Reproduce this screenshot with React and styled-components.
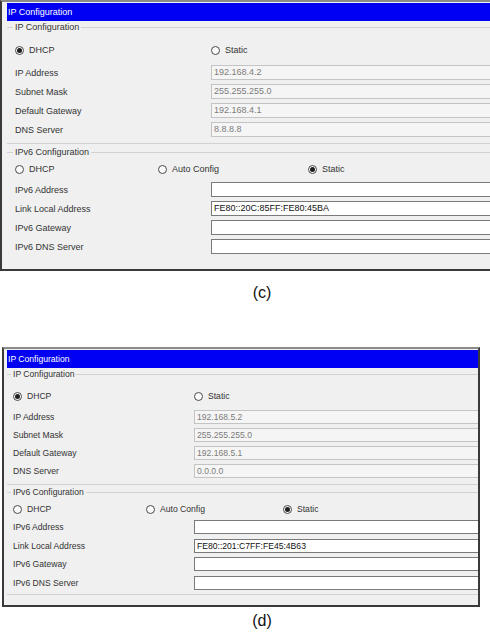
import React from "react";
import styled, { createGlobalStyle } from "styled-components";

const GlobalStyle = createGlobalStyle`
  body {
    margin: 0;
    background: #ffffff;
    font-family: "Liberation Sans", Arial, sans-serif;
  }
`;

const Page = styled.div`
  display: flex;
  flex-direction: column;
  width: 490px;
`;

const Window = styled.div`
  box-sizing: border-box;
  width: ${(p) => p.$s.width}px;
  margin-left: ${(p) => p.$s.left}px;
  background: #f0f0f0;
  border: 2px solid #3a3a3a;
  border-top-color: #8a8a8a;
  border-right: ${(p) => (p.$s.rightBorder ? "2px solid #3a3a3a" : "none")};
  font-size: ${(p) => p.$s.font}px;
  color: #333;
  display: flex;
  flex-direction: column;
`;

const TitleBar = styled.div`
  height: 18px;
  line-height: 18px;
  margin: ${(p) => p.$s.titleTop}px 0 0 ${(p) => p.$s.titleLeft}px;
  background: #0000f2;
  color: #ffffff;
  padding-left: 1px;
`;

const Group = styled.div`
  display: flex;
  flex-direction: column;
  margin: ${(p) => p.$top}px 0 ${(p) => p.$bottom || 0}px ${(p) => p.$s.groupLeft}px;
  padding: 0 0 ${(p) => p.$padBottom}px ${(p) => p.$s.groupPad}px;
  border-bottom: ${(p) => (p.$line ? "1px solid #d2d2d2" : "none")};
`;

const GroupTitle = styled.div`
  display: flex;
  align-items: center;
  height: 11px;
  line-height: 11px;
  margin-left: -${(p) => p.$s.groupPad}px;
  color: #333;
  &::before {
    content: "";
    width: ${(p) => p.$s.groupPad - 2}px;
    border-top: 1px solid #d2d2d2;
    margin-right: 2px;
  }
  &::after {
    content: "";
    flex: 1;
    border-top: 1px solid #d2d2d2;
    margin-left: 2px;
  }
`;

const RadioRow = styled.div`
  display: grid;
  grid-template-columns: ${(p) => p.$cols};
  align-items: center;
  height: ${(p) => p.$h}px;
  margin: ${(p) => p.$top}px 0 ${(p) => p.$bottom}px 0;
`;

const RadioItem = styled.label`
  display: flex;
  align-items: center;
  gap: 5px;
`;

const RadioDot = styled.span`
  box-sizing: border-box;
  width: 9px;
  height: 9px;
  border-radius: 50%;
  border: 1px solid #4a4a4a;
  background: #fafafa;
  display: flex;
  align-items: center;
  justify-content: center;
  &::after {
    content: "";
    width: 5px;
    height: 5px;
    border-radius: 50%;
    background: ${(p) => (p.$checked ? "#1e1e1e" : "transparent")};
  }
`;

const FieldRow = styled.div`
  display: grid;
  grid-template-columns: ${(p) => p.$s.labelCol}px 1fr;
  align-items: center;
  height: ${(p) => p.$h}px;
`;

const Label = styled.span`
  white-space: nowrap;
`;

const Field = styled.div`
  box-sizing: border-box;
  height: ${(p) => p.$h}px;
  line-height: ${(p) => p.$h - 2}px;
  padding-left: 2px;
  white-space: nowrap;
  overflow: hidden;
  background: ${(p) => (p.$disabled ? "#f5f5f5" : "#ffffff")};
  border: 1px solid ${(p) => (p.$disabled ? "#c4c4c4" : "#7a7a7a")};
  border-right: none;
  color: ${(p) => (p.$disabled ? "#7c7c7c" : "#111")};
`;

const Caption = styled.div`
  font-family: Arial, "Liberation Sans", sans-serif;
  font-size: 16px;
  line-height: 18px;
  color: #111;
  text-align: center;
  padding: ${(p) => p.$top}px 0 0 34px;
  height: ${(p) => p.$h}px;
  box-sizing: border-box;
`;

const Radio = ({ checked, children }) => (
  <RadioItem>
    <RadioDot $checked={checked} />
    {children}
  </RadioItem>
);

const panels = [
  {
    id: "c",
    s: {
      width: 490, left: 0, rightBorder: false, font: 9,
      titleTop: 1, titleLeft: 5, groupLeft: 5, groupPad: 8,
      labelCol: 196, v4Cols: "196px 1fr", v6Cols: "143px 150px 1fr",
      rowH: 19, inputH: 15,
    },
    g1: { top: 1, radioTop: 6, radioH: 22, radioBottom: 2, padBottom: 4 },
    g2: { top: 3, radioTop: 1, radioH: 20, radioBottom: 1, padBottom: 13, line: false, bottom: 0 },
    v4: ["192.168.4.2", "255.255.255.0", "192.168.4.1", "8.8.8.8"],
    linkLocal: "FE80::20C:85FF:FE80:45BA",
    caption: { top: 13, h: 76 },
  },
  {
    id: "d",
    s: {
      width: 478, left: 2, rightBorder: true, font: 8.6,
      titleTop: 1, titleLeft: 3, groupLeft: 3, groupPad: 6,
      labelCol: 181, v4Cols: "181px 1fr", v6Cols: "133px 137px 1fr",
      rowH: 18, inputH: 14,
    },
    g1: { top: 1, radioTop: 6, radioH: 20, radioBottom: 2, padBottom: 4 },
    g2: { top: 2, radioTop: 2, radioH: 18, radioBottom: 0, padBottom: 2, line: true, bottom: 10, rowH: 18.6 },
    v4: ["192.168.5.2", "255.255.255.0", "192.168.5.1", "0.0.0.0"],
    linkLocal: "FE80::201:C7FF:FE45:4B63",
    caption: { top: 5, h: 30 },
  },
];

const v4Labels = ["IP Address", "Subnet Mask", "Default Gateway", "DNS Server"];
const v6Labels = ["IPv6 Address", "Link Local Address", "IPv6 Gateway", "IPv6 DNS Server"];

function ConfigPanel({ p }) {
  const { s, g1, g2 } = p;
  const v6Row = g2.rowH || s.rowH;
  return (
    <>
      <Window $s={s}>
        <TitleBar $s={s}>IP Configuration</TitleBar>
        <Group $s={s} $top={g1.top} $padBottom={g1.padBottom} $line>
          <GroupTitle $s={s}>IP Configuration</GroupTitle>
          <RadioRow $cols={s.v4Cols} $h={g1.radioH} $top={g1.radioTop} $bottom={g1.radioBottom}>
            <Radio checked>DHCP</Radio>
            <Radio>Static</Radio>
          </RadioRow>
          {v4Labels.map((label, i) => (
            <FieldRow key={label} $s={s} $h={s.rowH}>
              <Label>{label}</Label>
              <Field $h={s.inputH} $disabled>{p.v4[i]}</Field>
            </FieldRow>
          ))}
        </Group>
        <Group $s={s} $top={g2.top} $bottom={g2.bottom} $padBottom={g2.padBottom} $line={g2.line}>
          <GroupTitle $s={s}>IPv6 Configuration</GroupTitle>
          <RadioRow $cols={s.v6Cols} $h={g2.radioH} $top={g2.radioTop} $bottom={g2.radioBottom}>
            <Radio>DHCP</Radio>
            <Radio>Auto Config</Radio>
            <Radio checked>Static</Radio>
          </RadioRow>
          {v6Labels.map((label, i) => (
            <FieldRow key={label} $s={s} $h={v6Row}>
              <Label>{label}</Label>
              <Field $h={s.inputH}>{i === 1 ? p.linkLocal : ""}</Field>
            </FieldRow>
          ))}
        </Group>
      </Window>
      <Caption $top={p.caption.top} $h={p.caption.h}>({p.id})</Caption>
    </>
  );
}

export default function App() {
  return (
    <Page>
      <GlobalStyle />
      {panels.map((p) => (
        <ConfigPanel key={p.id} p={p} />
      ))}
    </Page>
  );
}
